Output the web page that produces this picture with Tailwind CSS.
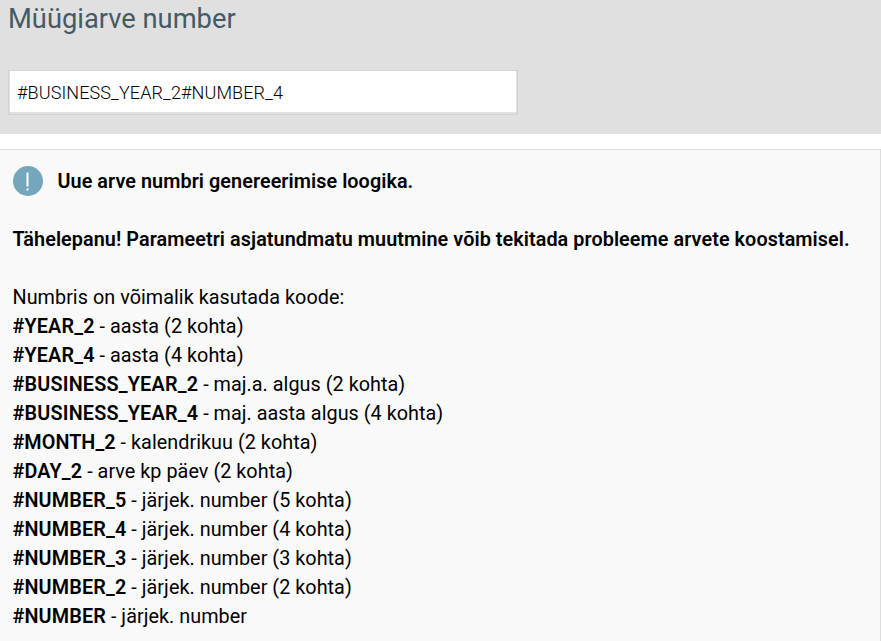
<!DOCTYPE html>
<html lang="et">

<head>
    <meta charset="UTF-8">
    <meta name="viewport" content="width=device-width, initial-scale=1.0">
    <title>Müügiarve number</title>
    <script src="https://cdn.jsdelivr.net/npm/@tailwindcss/browser@4"></script>
</head>

<body class="bg-white font-['Roboto',sans-serif] text-black overflow-hidden">
    <!-- Setting name and value -->
    <header class="h-[134px] bg-[#e0e0e0] px-2">
        <h1 class="h-[70px] pt-[3px] text-[27.3px] leading-[32px] text-[#455a64]">Müügiarve number</h1>
        <div class="w-[510px] h-[45px] border border-[#cfd4da] pb-[2px] pr-px pl-px">
            <input type="text" value="#BUSINESS_YEAR_2#NUMBER_4"
                class="block w-full h-[41px] bg-white pl-[7px] pt-[2px] text-[18px] tracking-[0.1px] font-light text-black">
        </div>
    </header>

    <!-- Help text -->
    <main class="mt-[15px] h-[492px] border-t border-r border-[#dcdcdc] bg-[#f9f9f9] pl-[12.5px] pt-4 text-[19.8px] leading-[29px] tracking-[0.04px]">
        <div class="flex items-center gap-[15px] h-[30px]">
            <svg class="size-[30px]" viewBox="0 0 30 30">
                <circle cx="15" cy="15" r="15" fill="#74a7bc" />
                <path d="M13.5 6.5h2v14h-2zM13.5 22.5h2v2h-2z" fill="#fff" />
            </svg>
            <p class="font-semibold tracking-[0.07px]">Uue arve numbri genereerimise loogika.</p>
        </div>
        <p class="mt-[29px] font-semibold tracking-[0.075px] whitespace-nowrap">Tähelepanu! Parameetri asjatundmatu muutmine võib tekitada probleeme arvete koostamisel.</p>
        <p class="mt-[29px]">Numbris on võimalik kasutada koode:</p>
        <ul>
            <li><b class="font-semibold tracking-[0.15px]">#YEAR_2</b> - aasta (2 kohta)</li>
            <li><b class="font-semibold tracking-[0.15px]">#YEAR_4</b> - aasta (4 kohta)</li>
            <li><b class="font-semibold tracking-[0.2px]">#BUSINESS_YEAR_2</b> - maj.a. algus (2 kohta)</li>
            <li><b class="font-semibold tracking-[0.2px]">#BUSINESS_YEAR_4</b> - maj. aasta algus (4 kohta)</li>
            <li><b class="font-semibold">#MONTH_2</b> - kalendrikuu (2 kohta)</li>
            <li><b class="font-semibold tracking-[0.15px]">#DAY_2</b> - arve kp päev (2 kohta)</li>
            <li><b class="font-semibold tracking-[0.15px]">#NUMBER_5</b> - järjek. number (5 kohta)</li>
            <li><b class="font-semibold tracking-[0.15px]">#NUMBER_4</b> - järjek. number (4 kohta)</li>
            <li><b class="font-semibold tracking-[0.15px]">#NUMBER_3</b> - järjek. number (3 kohta)</li>
            <li><b class="font-semibold tracking-[0.15px]">#NUMBER_2</b> - järjek. number (2 kohta)</li>
            <li><b class="font-semibold tracking-[0.15px]">#NUMBER</b> - järjek. number</li>
        </ul>
    </main>
</body>

</html>
